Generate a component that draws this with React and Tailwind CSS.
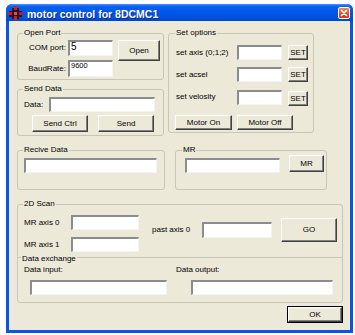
import React from "react";

function Btn({ className = "", children }) {
  return (
    <button
      type="button"
      className={`flex items-center justify-center bg-[#ece9d8] border border-t-white border-l-white border-b-[#404040] border-r-[#404040] shadow-[inset_-1px_-1px_0_#808080] text-[8px] leading-none text-black ${className}`}
    >
      {children}
    </button>
  );
}

function Field({ className = "", children }) {
  return (
    <div
      className={`bg-white border-t-2 border-l-2 border-t-[#8c8c8c] border-l-[#8c8c8c] border-b border-r border-b-[#f4f4f0] border-r-[#f4f4f0] text-black leading-none pl-[1px] ${className}`}
    >
      {children}
    </div>
  );
}

function Group({ title, className = "", legendClass = "", children }) {
  return (
    <fieldset className={`border border-[#c9c6b6] rounded-[3px] p-0 m-0 min-w-0 ${className}`}>
      <legend className={`ml-[5px] px-[1px] text-[8px] leading-[10px] text-black ${legendClass}`}>{title}</legend>
      {children}
    </fieldset>
  );
}

function AppIcon() {
  return (
    <svg width="15" height="14" viewBox="0 0 15 14">
      <rect x="1" y="5" width="13" height="6" fill="#1a1a2a" />
      <rect x="4" y="2" width="7" height="11" fill="#1a1a2a" />
      <rect x="6" y="0" width="3" height="4" fill="#e01818" />
      <rect x="0" y="6" width="4" height="3" fill="#e01818" />
      <rect x="11" y="6" width="4" height="3" fill="#c01050" />
      <rect x="6" y="10" width="3" height="4" fill="#e01818" />
      <rect x="6" y="6" width="3" height="3" fill="#ff4040" />
    </svg>
  );
}

export default function App() {
  return (
    <div className="w-[355px] h-[335px] bg-white pt-[4px] pl-[6px] font-['Liberation_Sans',Arial,sans-serif] text-[8px] leading-[10px] text-black">
      <div className="w-[347px] h-[329px] flex flex-col bg-[#0a56e4] rounded-t-[6px]">
        {/* Title bar */}
        <div className="h-[17px] flex items-center pl-[2px] pr-[3px] rounded-t-[6px] bg-[linear-gradient(180deg,#4a92ff_0%,#0a62ee_14%,#0058e8_45%,#0052e0_80%,#0046cc_100%)]">
          <AppIcon />
          <span className="ml-[4px] pt-[2px] text-white font-bold text-[10.5px] leading-[12px] [text-shadow:1px_1px_0_#0a2a8a]">
            motor control for 8DCMC1
          </span>
          <div className="ml-auto w-[12px] h-[12px] rounded-[2px] border border-white bg-[linear-gradient(180deg,#f08a64_0%,#e0522a_50%,#c83c18_100%)] flex items-center justify-center">
            <svg width="8" height="8" viewBox="0 0 8 8">
              <path d="M1.5 1.5 L6.5 6.5 M6.5 1.5 L1.5 6.5" stroke="white" strokeWidth="1.6" strokeLinecap="round" />
            </svg>
          </div>
        </div>

        {/* Client */}
        <div className="flex-1 mx-[3px] mb-[3px] bg-[#ece9d8] flex flex-col pl-[8px] pt-[7px]">
          {/* Row 1 */}
          <div className="flex">
            <div className="flex flex-col w-[147px]">
              <Group title="Open Port" className="h-[52px]">
                <div className="flex items-start mt-[2px]">
                  <div className="flex flex-col">
                    <div className="flex items-center h-[16px]">
                      <span className="w-[50px] text-right pr-[2px]">COM port:</span>
                      <Field className="w-[45px] h-[16px] text-[10px]">5</Field>
                    </div>
                    <div className="flex items-center h-[17px] mt-[4px]">
                      <span className="w-[50px] text-right pr-[2px]">BaudRate:</span>
                      <Field className="w-[45px] h-[17px] text-[7.5px]">9600</Field>
                    </div>
                  </div>
                  <Btn className="ml-[5px] w-[42px] h-[21px]">Open</Btn>
                </div>
              </Group>
              <Group title="Send Data" className="h-[52px] mt-[4px]">
                <div className="flex items-center mt-[3px]">
                  <span className="ml-[6px] w-[25px]">Data:</span>
                  <Field className="w-[106px] h-[15px]" />
                </div>
                <div className="flex mt-[3px] ml-[14px]">
                  <Btn className="w-[56px] h-[17px]">Send Ctrl</Btn>
                  <Btn className="ml-[10px] w-[56px] h-[17px]">Send</Btn>
                </div>
              </Group>
            </div>
            <Group title="Set options" className="ml-[4px] w-[146px] h-[105px]" legendClass="ml-[6px]">
              <div className="flex flex-col ml-[7px]">
                <div className="flex items-center mt-[7px]">
                  <span className="w-[61px]">set axis (0;1;2)</span>
                  <Field className="w-[45px] h-[15px]" />
                  <Btn className="ml-[6px] w-[20px] h-[15px]">SET</Btn>
                </div>
                <div className="flex items-center mt-[7px]">
                  <span className="w-[61px]">set acsel</span>
                  <Field className="w-[45px] h-[15px]" />
                  <Btn className="ml-[6px] w-[20px] h-[15px]">SET</Btn>
                </div>
                <div className="flex items-center mt-[6px]">
                  <span className="w-[61px]">set velosity</span>
                  <Field className="w-[45px] h-[15px]" />
                  <Btn className="ml-[6px] w-[20px] h-[15px] mt-[3px]">SET</Btn>
                </div>
                <div className="flex mt-[9px] -ml-[1px]">
                  <Btn className="w-[57px] h-[15px]">Motor On</Btn>
                  <Btn className="ml-[5px] w-[56px] h-[15px]">Motor Off</Btn>
                </div>
              </div>
            </Group>
          </div>

          {/* Row 2 */}
          <div className="flex mt-[9px]">
            <Group title="Recive Data" className="w-[148px] h-[45px]">
              <Field className="ml-[6px] mt-[3px] w-[133px] h-[15px]" />
            </Group>
            <Group title="MR" className="ml-[10px] w-[152px] h-[45px]" legendClass="ml-[6px]">
              <div className="flex items-start">
                <Field className="ml-[9px] mt-[3px] w-[95px] h-[15px]" />
                <Btn className="ml-[9px] w-[35px] h-[17px]">MR</Btn>
              </div>
            </Group>
          </div>

          {/* Row 3: 2D Scan */}
          <Group title="2D Scan" className="mt-[9px] w-[326px] h-[104px]">
            <div className="flex items-start">
              <div className="flex flex-col ml-[6px]">
                <div className="flex items-center mt-[6px]">
                  <span className="w-[47px]">MR axis 0</span>
                  <Field className="w-[68px] h-[15px]" />
                </div>
                <div className="flex items-center mt-[7px]">
                  <span className="w-[47px]">MR axis 1</span>
                  <Field className="w-[68px] h-[15px]" />
                </div>
              </div>
              <div className="flex items-center mt-[13px] ml-[13px]">
                <span className="w-[50px]">past axis 0</span>
                <Field className="w-[70px] h-[16px]" />
              </div>
              <Btn className="ml-[9px] mt-[9px] w-[56px] h-[24px]">GO</Btn>
            </div>
            <fieldset className="-mt-[2px] border-t border-[#c9c6b6] border-x-0 border-b-0 p-0 m-0 min-w-0">
              <legend className="ml-[3px] px-[1px] pt-[4px] text-[8px] leading-[10px]">Data exchange</legend>
              <div className="flex mt-[1px]">
                <span className="ml-[6px] w-[152px]">Data input:</span>
                <span>Data output:</span>
              </div>
              <div className="flex mt-[5px]">
                <Field className="ml-[12px] w-[137px] h-[15px]" />
                <Field className="ml-[24px] w-[142px] h-[15px]" />
              </div>
            </fieldset>
          </Group>

          {/* OK */}
          <div className="flex justify-end pr-[7px] mt-[3px]">
            <div className="border border-black">
              <Btn className="w-[54px] h-[15px]">OK</Btn>
            </div>
          </div>
        </div>
      </div>
    </div>
  );
}
